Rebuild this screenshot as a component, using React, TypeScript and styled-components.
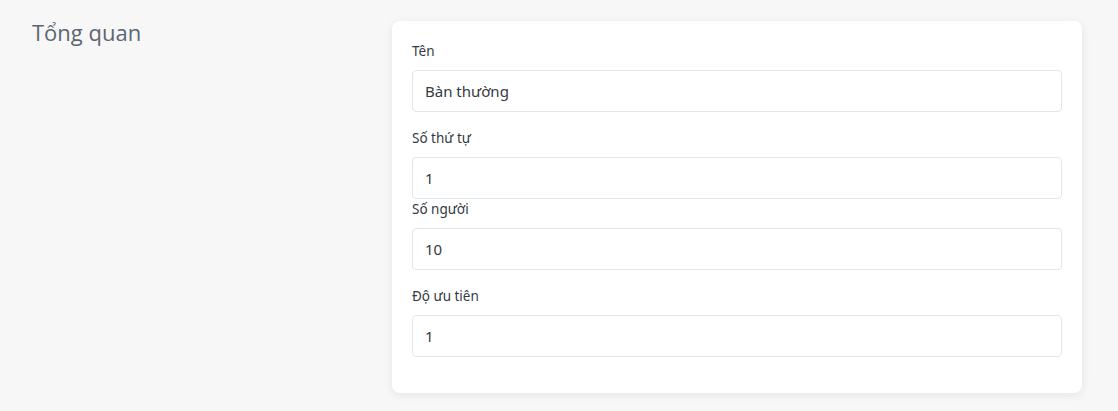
import styled, { createGlobalStyle } from 'styled-components'

const GlobalStyle = createGlobalStyle`
  html, body {
    margin: 0;
    padding: 0;
    background-color: #f7f7f7;
  }
  body {
    font-family: "Noto Sans", "Open Sans", sans-serif;
  }
`

interface FieldProps {
  label: string
  value: string
  tight?: boolean
}

const Field = ({ label, value, tight }: FieldProps) => {
  return (
    <Group $tight={tight}>
      <Label>{label}</Label>
      <Input type="text" defaultValue={value} />
    </Group>
  )
}

const App = () => {
  return (
    <>
      <GlobalStyle />
      <Page>
        <Side>
          <Title>Tổng quan</Title>
        </Side>
        <Card>
          <Field label="Tên" value="Bàn thường" />
          <Field label="Số thứ tự" value="1" tight />
          <Field label="Số người" value="10" />
          <Field label="Độ ưu tiên" value="1" />
        </Card>
      </Page>
    </>
  )
}

export default App

const Page = styled.div`
  display: flex;
  align-items: flex-start;
  padding: 21px 36px 19px 32px;
  min-height: 411px;
  box-sizing: border-box;
`

const Side = styled.div`
  width: 360px;
  flex-shrink: 0;
`

const Title = styled.h2`
  margin: 0;
  font-family: "Open Sans", sans-serif;
  font-size: 22px;
  font-weight: 400;
  line-height: 22px;
  color: #5b6670;
`

const Card = styled.div`
  flex: 1;
  background-color: #fff;
  border-radius: 8px;
  padding: 20px 20px 20px;
  box-shadow: 0 2px 10px rgba(0, 0, 0, 0.08);
`

const Group = styled.div<{ $tight?: boolean }>`
  display: flex;
  flex-direction: column;
  margin-bottom: ${(p) => (p.$tight ? '0' : '16px')};
`

const Label = styled.label`
  font-size: 13.5px;
  line-height: 21px;
  color: #343a40;
  margin-bottom: 8px;
`

const Input = styled.input`
  height: 42px;
  box-sizing: border-box;
  border: 1px solid #e1e6ee;
  border-radius: 4px;
  padding: 0 12px 1px;
  font-family: "Noto Sans", sans-serif;
  font-size: 15px;
  color: #343a40;
  outline: none;
  width: 100%;
`
